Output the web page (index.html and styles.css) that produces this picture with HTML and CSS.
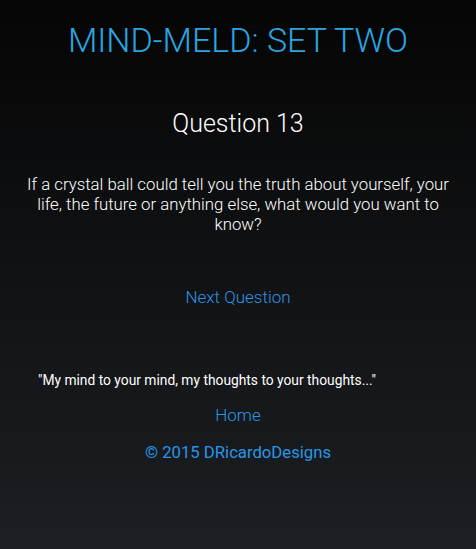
FILE: index.html
```html
<!DOCTYPE html>
<html>
<head>
<meta charset="utf-8">
<link rel="stylesheet" href="styles.css">
</head>
<body>
<div class="page">
  <h1 class="title">MIND-MELD: SET TWO</h1>
  <h2 class="qnum">Question 13</h2>
  <p class="question">If a crystal ball could tell you the truth about yourself, your life, the future or anything else, what would you want to know?</p>
  <a class="next" href="#">Next Question</a>
  <footer class="footer">
    <p class="quote">"My mind to your mind, my thoughts to your thoughts..."</p>
    <a class="home" href="#">Home</a>
    <p class="copy">© 2015 DRicardoDesigns</p>
  </footer>
</div>
</body>
</html>
```
FILE: styles.css
```css
html, body {
  margin: 0;
  padding: 0;
  height: 100%;
}
body {
  background: linear-gradient(to bottom, #050505 0%, #1c1f23 100%);
  font-family: Roboto, "Liberation Sans", sans-serif;
  font-weight: 300;
  color: #ffffff;
  text-align: center;
}
.page {
  display: flex;
  flex-direction: column;
  align-items: center;
  padding: 0 12px;
}
.title {
  margin: 20px 0 0;
  font-size: 34px;
  font-weight: 300;
  color: #29a6e2;
  line-height: 41px;
}
.qnum {
  margin: 48px 0 0;
  font-size: 25px;
  font-weight: 300;
  line-height: 30px;
  color: #ffffff;
}
.question {
  margin: 35px 0 0;
  font-size: 16.8px;
  line-height: 20px;
  max-width: 430px;
}
.next {
  margin-top: 53px;
  font-size: 17px;
  color: #2a96e8;
  text-decoration: none;
  line-height: 20px;
}
.footer {
  display: flex;
  flex-direction: column;
  align-items: center;
  align-self: stretch;
  margin-top: 65px;
}
.quote {
  align-self: flex-start;
  margin: 0 0 0 26px;
  font-size: 13.8px;
  font-weight: 400;
  line-height: 16px;
}
.home {
  margin-top: 17px;
  font-size: 17px;
  color: #2a96e8;
  text-decoration: none;
  line-height: 20px;
}
.copy {
  margin: 18px 0 0;
  font-size: 16.7px;
  font-weight: 400;
  color: #2a96e8;
  line-height: 20px;
}
```
